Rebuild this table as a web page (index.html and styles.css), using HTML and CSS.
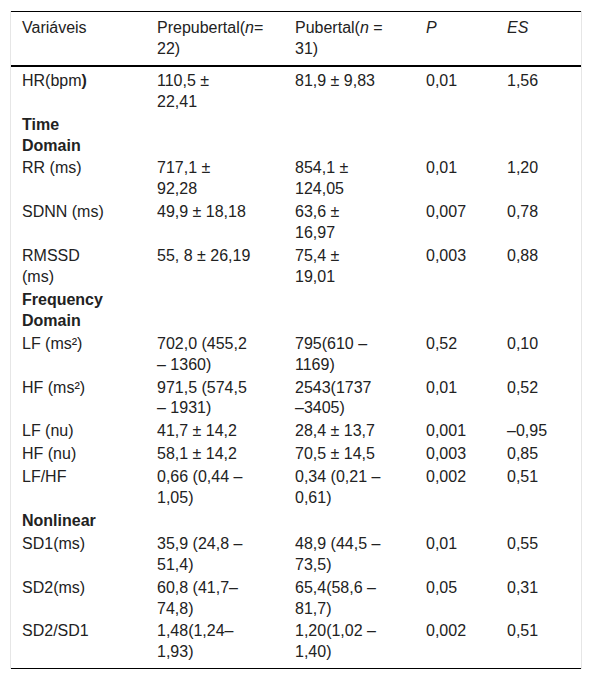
FILE: index.html
```html
<!DOCTYPE html>
<html lang="pt">
<head>
    <meta charset="UTF-8">
    <meta name="viewport" content="width=device-width, initial-scale=1.0">
    <title>Variáveis HRV</title>
    <link rel="stylesheet" href="styles.css">
</head>
<body>
    <div class="table-wrap">
        <table class="data-table">
            <colgroup>
                <col class="c1">
                <col class="c2">
                <col class="c3">
                <col class="c4">
                <col class="c5">
            </colgroup>
            <thead>
                <tr>
                    <th>Variáveis</th>
                    <th>Prepubertal(<i>n</i>= 22)</th>
                    <th>Pubertal(<i>n</i> = 31)</th>
                    <th><i>P</i></th>
                    <th><i>ES</i></th>
                </tr>
            </thead>
            <tbody>
                <tr>
                    <td>HR(bpm<b>)</b></td>
                    <td>110,5 ± 22,41</td>
                    <td>81,9 ± 9,83</td>
                    <td>0,01</td>
                    <td>1,56</td>
                </tr>
                <tr class="group">
                    <td><b>Time Domain</b></td>
                    <td></td><td></td><td></td><td></td>
                </tr>
                <tr>
                    <td>RR (ms)</td>
                    <td>717,1 ± 92,28</td>
                    <td>854,1 ± 124,05</td>
                    <td>0,01</td>
                    <td>1,20</td>
                </tr>
                <tr>
                    <td>SDNN (ms)</td>
                    <td>49,9 ± 18,18</td>
                    <td>63,6 ± 16,97</td>
                    <td>0,007</td>
                    <td>0,78</td>
                </tr>
                <tr>
                    <td>RMSSD (ms)</td>
                    <td>55, 8 ± 26,19</td>
                    <td>75,4 ± 19,01</td>
                    <td>0,003</td>
                    <td>0,88</td>
                </tr>
                <tr class="group">
                    <td><b>Frequency Domain</b></td>
                    <td></td><td></td><td></td><td></td>
                </tr>
                <tr>
                    <td>LF (ms²)</td>
                    <td>702,0 (455,2 – 1360)</td>
                    <td>795(610 – 1169)</td>
                    <td>0,52</td>
                    <td>0,10</td>
                </tr>
                <tr>
                    <td>HF (ms²)</td>
                    <td>971,5 (574,5 – 1931)</td>
                    <td>2543(1737 –3405)</td>
                    <td>0,01</td>
                    <td>0,52</td>
                </tr>
                <tr>
                    <td>LF (nu)</td>
                    <td>41,7 ± 14,2</td>
                    <td>28,4 ± 13,7</td>
                    <td>0,001</td>
                    <td>–0,95</td>
                </tr>
                <tr>
                    <td>HF (nu)</td>
                    <td>58,1 ± 14,2</td>
                    <td>70,5 ± 14,5</td>
                    <td>0,003</td>
                    <td>0,85</td>
                </tr>
                <tr>
                    <td>LF/HF</td>
                    <td>0,66 (0,44 – 1,05)</td>
                    <td>0,34 (0,21 – 0,61)</td>
                    <td>0,002</td>
                    <td>0,51</td>
                </tr>
                <tr class="group">
                    <td><b>Nonlinear</b></td>
                    <td></td><td></td><td></td><td></td>
                </tr>
                <tr>
                    <td>SD1(ms)</td>
                    <td>35,9 (24,8 – 51,4)</td>
                    <td>48,9 (44,5 – 73,5)</td>
                    <td>0,01</td>
                    <td>0,55</td>
                </tr>
                <tr>
                    <td>SD2(ms)</td>
                    <td>60,8 (41,7– 74,8)</td>
                    <td>65,4(58,6 – 81,7)</td>
                    <td>0,05</td>
                    <td>0,31</td>
                </tr>
                <tr>
                    <td>SD2/SD1</td>
                    <td>1,48(1,24– 1,93)</td>
                    <td>1,20(1,02 – 1,40)</td>
                    <td>0,002</td>
                    <td>0,51</td>
                </tr>
            </tbody>
        </table>
    </div>
</body>
</html>
```

FILE: styles.css
```css
body {
    font-family: "Liberation Sans", Arial, sans-serif;
    font-size: 16px;
    color: #222;
    margin: 0;
    background-color: #fff;
}

/* Wrapper with the faint side rules */
.table-wrap {
    width: 570px;
    margin: 11px 10px;
    border-left: 1px solid #e6e6e6;
    border-right: 1px solid #e6e6e6;
}

.data-table {
    width: 570px;
    table-layout: fixed;
    border-collapse: collapse;
    line-height: 20.9px;
    border-top: 1px solid #000;
    border-bottom: 1px solid #000;
}

.c1 { width: 135px; }
.c2 { width: 138px; }
.c3 { width: 131px; }
.c4 { width: 81px; }
.c5 { width: 85px; }

.data-table th,
.data-table td {
    text-align: left;
    vertical-align: top;
    padding: 1px 32px 1px 11px;
}

.data-table th {
    font-weight: normal;
    padding-top: 6px;
    padding-bottom: 5px;
    border-bottom: 2px solid #000;
}

.data-table tbody tr:first-child td {
    padding-top: 4px;
}

.data-table tbody tr:last-child td {
    padding-bottom: 5px;
}
```
